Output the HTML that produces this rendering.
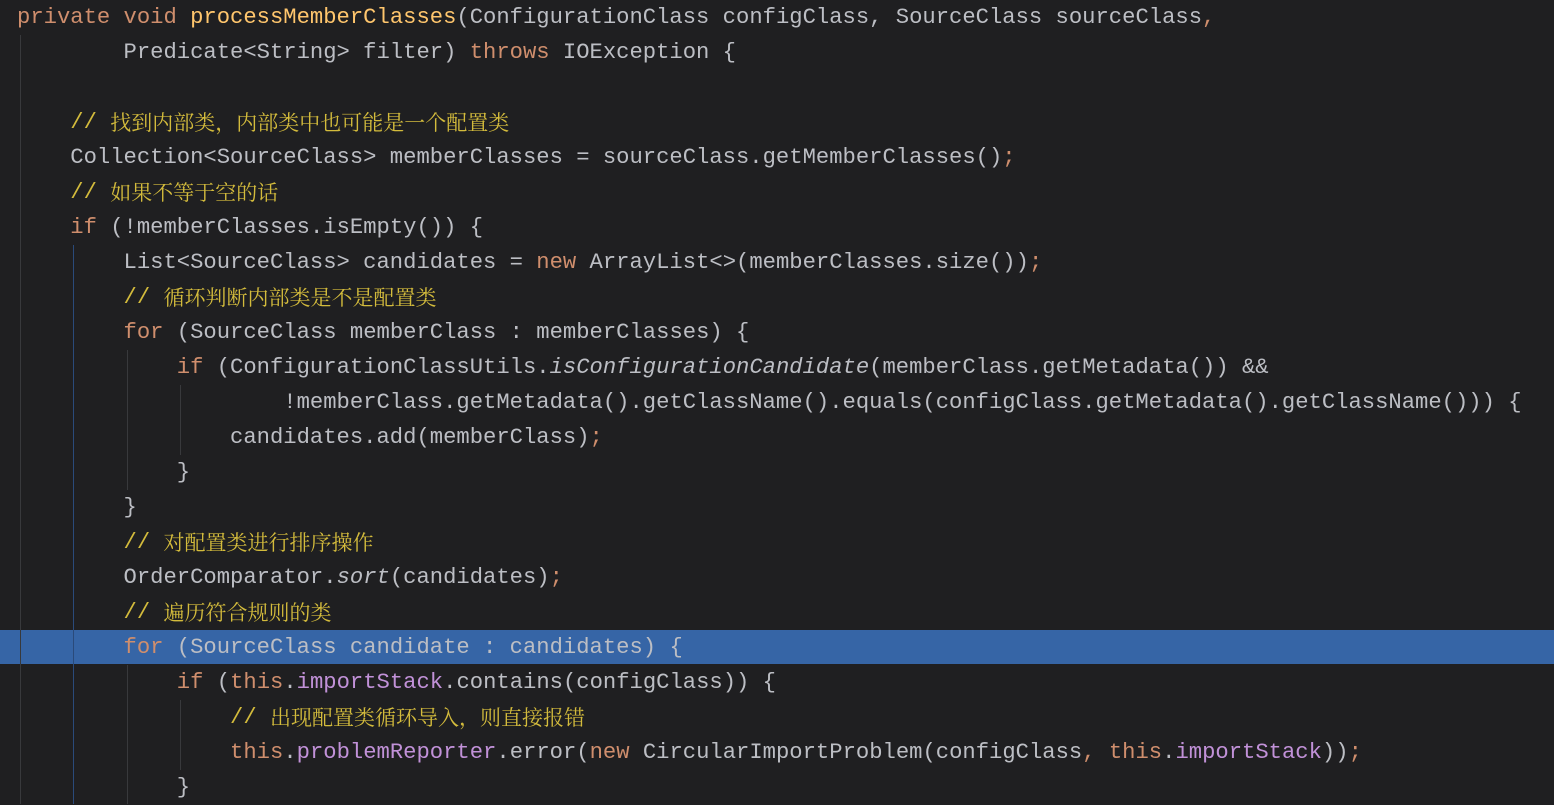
<!DOCTYPE html>
<html><head><meta charset="utf-8"><style>
html,body{margin:0;padding:0;background:#1f1f21;width:1554px;height:804px;overflow:hidden}
.c{position:absolute;left:0;top:0;width:1554px}
.l{position:absolute;left:17px;height:35px;line-height:35px;white-space:pre;font-family:"Liberation Mono","DejaVu Sans Mono",monospace;font-size:22.2px;color:#bcbec4}
.k{color:#cf8e6d}.m{color:#ffc66d}.f{color:#c191d8}.i{font-style:italic}
.cm{color:#d3bb3c}.cm .z{font-family:"Noto Serif CJK SC",serif;font-size:21px;line-height:35px;display:inline-block;position:relative;top:0px;vertical-align:top}
.g{position:absolute;width:1px;background:#38393c}
.hl{position:absolute;left:0;top:630px;width:1554px;height:34px;background:#3665a6}
</style></head><body>
<div class="hl"></div>
<div class="g" style="left:20px;top:35px;height:769px"></div>
<div class="g" style="left:73px;top:245px;height:559px;background:#2a4a7a"></div>
<div class="g" style="left:127px;top:350px;height:140px"></div>
<div class="g" style="left:127px;top:665px;height:139px"></div>
<div class="g" style="left:180px;top:385px;height:70px"></div>
<div class="g" style="left:180px;top:700px;height:70px"></div>
<div class="c">
<div class="l" style="top:0px"><span class="k">private void </span><span class="m">processMemberClasses</span>(ConfigurationClass configClass, SourceClass sourceClass<span class="k">,</span></div>
<div class="l" style="top:35px">        Predicate&lt;String&gt; filter) <span class="k">throws </span>IOException {</div>
<div class="l cm" style="top:105px">    // <span class="z">找到内部类，内部类中也可能是一个配置类</span></div>
<div class="l" style="top:140px">    Collection&lt;SourceClass&gt; memberClasses = sourceClass.getMemberClasses()<span class="k">;</span></div>
<div class="l cm" style="top:175px">    // <span class="z">如果不等于空的话</span></div>
<div class="l" style="top:210px">    <span class="k">if </span>(!memberClasses.isEmpty()) {</div>
<div class="l" style="top:245px">        List&lt;SourceClass&gt; candidates = <span class="k">new </span>ArrayList&lt;&gt;(memberClasses.size())<span class="k">;</span></div>
<div class="l cm" style="top:280px">        // <span class="z">循环判断内部类是不是配置类</span></div>
<div class="l" style="top:315px">        <span class="k">for </span>(SourceClass memberClass : memberClasses) {</div>
<div class="l" style="top:350px">            <span class="k">if </span>(ConfigurationClassUtils.<span class="i">isConfigurationCandidate</span>(memberClass.getMetadata()) &amp;&amp;</div>
<div class="l" style="top:385px">                    !memberClass.getMetadata().getClassName().equals(configClass.getMetadata().getClassName())) {</div>
<div class="l" style="top:420px">                candidates.add(memberClass)<span class="k">;</span></div>
<div class="l" style="top:455px">            }</div>
<div class="l" style="top:490px">        }</div>
<div class="l cm" style="top:525px">        // <span class="z">对配置类进行排序操作</span></div>
<div class="l" style="top:560px">        OrderComparator.<span class="i">sort</span>(candidates)<span class="k">;</span></div>
<div class="l cm" style="top:595px">        // <span class="z">遍历符合规则的类</span></div>
<div class="l" style="top:630px">        <span class="k">for </span>(SourceClass candidate : candidates) {</div>
<div class="l" style="top:665px">            <span class="k">if </span>(<span class="k">this</span>.<span class="f">importStack</span>.contains(configClass)) {</div>
<div class="l cm" style="top:700px">                // <span class="z">出现配置类循环导入，则直接报错</span></div>
<div class="l" style="top:735px">                <span class="k">this</span>.<span class="f">problemReporter</span>.error(<span class="k">new </span>CircularImportProblem(configClass<span class="k">, this</span>.<span class="f">importStack</span>))<span class="k">;</span></div>
<div class="l" style="top:770px">            }</div>
</div>
</body></html>
